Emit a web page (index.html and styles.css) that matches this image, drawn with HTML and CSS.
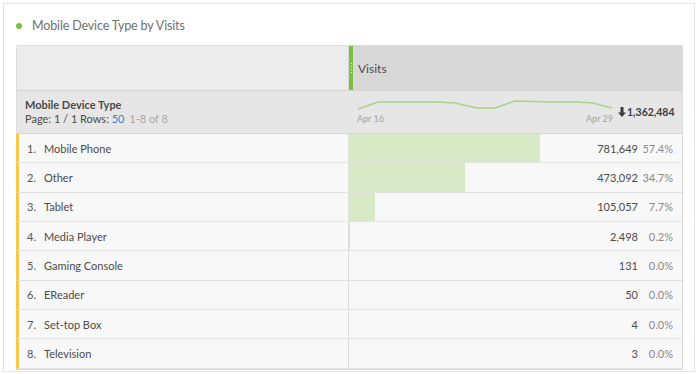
FILE: index.html
```html
<!DOCTYPE html>
<html>
<head>
<meta charset="utf-8">
<link rel="stylesheet" href="styles.css">
</head>
<body>
<div class="card">
  <div class="title"><span class="dot"></span><span class="title-text">Mobile Device Type by Visits</span></div>
  <div class="table">
    <div class="hdr-left"></div>
    <div class="hdr-right">
      <div class="handle"><span></span><span></span><span></span><span></span></div>
      <span class="metric">Visits</span>
    </div>
    <div class="sub-left">
      <div class="dim">Mobile Device Type</div>
      <div class="pager">Page: 1 / 1 Rows: <span class="blue">50</span> <span class="muted">1-8 of 8</span></div>
    </div>
    <div class="sub-right">
      <div class="spark">
        <svg width="256" height="16" viewBox="0 0 256 16">
          <polyline fill="none" stroke="#a6d48a" stroke-width="1.5" points="1,13 21,6 80,6 98,7 120,12 138,12 158,5 196,6 218,6 236,7 255,12"/>
        </svg>
        <div class="spark-labels"><span>Apr 16</span><span>Apr 29</span></div>
      </div>
      <div class="total"><svg class="arrow" width="8" height="10" viewBox="0 0 8 10"><path d="M2.5 0h3v5.5H8L4 10 0 5.5h2.5z" fill="#3d3d3d"/></svg>1,362,484</div>
    </div>

    <div class="row-left"><span class="num">1.</span>Mobile Phone</div>
    <div class="row-right"><div class="bar" style="width:57.4%"></div><span class="val">781,649</span><span class="pct">57.4%</span></div>
    <div class="row-left"><span class="num">2.</span>Other</div>
    <div class="row-right"><div class="bar" style="width:34.7%"></div><span class="val">473,092</span><span class="pct">34.7%</span></div>
    <div class="row-left"><span class="num">3.</span>Tablet</div>
    <div class="row-right"><div class="bar" style="width:7.7%"></div><span class="val">105,057</span><span class="pct">7.7%</span></div>
    <div class="row-left"><span class="num">4.</span>Media Player</div>
    <div class="row-right"><div class="bar" style="width:0.2%"></div><span class="val">2,498</span><span class="pct">0.2%</span></div>
    <div class="row-left"><span class="num">5.</span>Gaming Console</div>
    <div class="row-right"><span class="val">131</span><span class="pct">0.0%</span></div>
    <div class="row-left"><span class="num">6.</span>EReader</div>
    <div class="row-right"><span class="val">50</span><span class="pct">0.0%</span></div>
    <div class="row-left"><span class="num">7.</span>Set-top Box</div>
    <div class="row-right"><span class="val">4</span><span class="pct">0.0%</span></div>
    <div class="row-left"><span class="num">8.</span>Television</div>
    <div class="row-right"><span class="val">3</span><span class="pct">0.0%</span></div>
  </div>
</div>
</body>
</html>
```
FILE: styles.css
```css
* { box-sizing: border-box; }
html, body { margin: 0; padding: 0; background: #ffffff; }
body { font-family: Lato, "Open Sans", sans-serif; color: #4b4b4b; }

.card {
  margin: 3px 0 0 3px;
  width: 692px;
  height: 369px;
  border: 1px solid #e4e4e4;
  background: #fff;
  padding: 0 11px 0 12px;
}

.title {
  height: 41px;
  display: flex;
  align-items: center;
  padding-top: 2px;
}
.dot {
  width: 6px; height: 6px; border-radius: 50%;
  background: #7ac143;
  margin-left: 0;
  margin-right: 10px;
}
.title-text { font-size: 12.5px; color: #707070; letter-spacing: -0.15px; }

.table {
  display: grid;
  grid-template-columns: 332px 1fr;
  border: 1px solid #dcdcdc;
  width: 667px;
}

.hdr-left {
  height: 45px;
  background: #ececec;
  border-right: 1px solid #d6d6d6;
  border-bottom: 1px solid #d3d3d3;
}
.hdr-right {
  height: 45px;
  background: #d8d8d8;
  border-bottom: 1px solid #d3d3d3;
  display: flex;
  align-items: center;
}
.handle {
  width: 4px;
  align-self: stretch;
  background: #7ac143;
  display: flex;
  flex-direction: column;
  justify-content: center;
  align-items: center;
  gap: 2px;
  margin-right: 5px;
}
.handle span { width: 1px; height: 1px; background: #e8f5dc; }
.metric { font-size: 12px; color: #4b4b4b; margin-top: 1px; }

.sub-left, .sub-right {
  height: 43px;
  background: #e6e6e6;
  border-bottom: 1px solid #d8d8d8;
}
.sub-left {
  padding: 7px 0 0 8px;
  border-right: 1px solid #e6e6e6;
}
.dim { font-size: 11px; font-weight: bold; color: #4b4b4b; line-height: 14px; }
.pager { font-size: 11px; color: #4b4b4b; line-height: 14px; }
.blue { color: #3f7fd2; }
.muted { color: #a8a8a8; margin-left: 2px; }

.sub-right {
  display: flex;
  align-items: flex-start;
  padding: 5px 0 0 8px;
}
.spark { width: 256px; display: flex; flex-direction: column; }
.spark svg { display: block; }
.spark-labels {
  display: flex;
  justify-content: space-between;
  font-size: 9px;
  color: #a3a3a3;
  line-height: 11px;
  margin-top: 1px;
}
.total {
  margin: 10px 0 0 5px;
  font-size: 10.5px;
  font-weight: bold;
  color: #3d3d3d;
  display: flex;
  align-items: center;
}
.arrow { margin-right: 1px; }

.row-left, .row-right {
  height: 29.33px;
  background: #f8f8f8;
  border-bottom: 1px solid #e2e2e2;
  font-size: 11px;
  display: flex;
  align-items: center;
}
.row-left {
  border-left: 3px solid #f6c94b;
  margin-left: -1px;
  border-right: 1px solid #dedede;
  padding-left: 8px;
  color: #4b4b4b;
}
.num { width: 17px; color: #555; }
.row-right {
  position: relative;
  justify-content: flex-end;
  padding-right: 9px;
}
.bar {
  position: absolute;
  left: 0; top: 0; bottom: 0;
  background: #d8e9c6;
}
.val { position: relative; color: #4b4b4b; }
.pct { position: relative; width: 35px; text-align: right; color: #8a8a8a; }
```
